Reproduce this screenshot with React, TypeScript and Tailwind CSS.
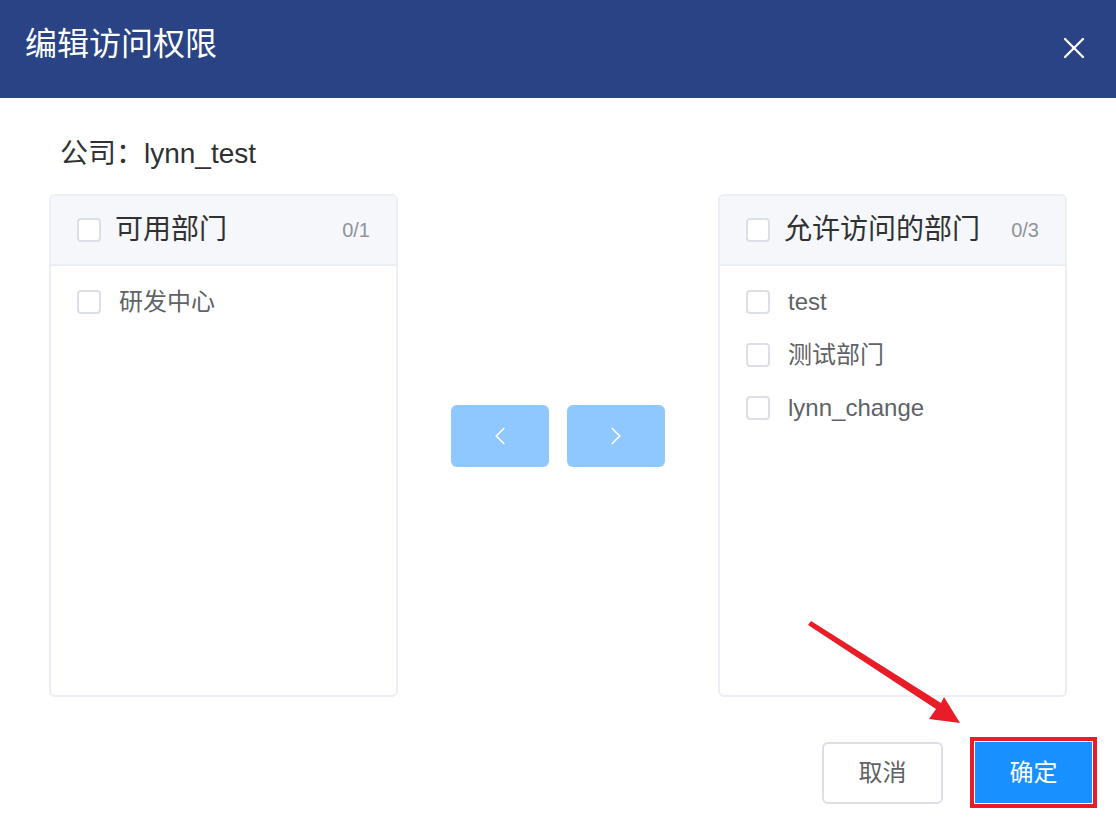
import { X, ChevronLeft, ChevronRight } from 'lucide-react';

const font = { fontFamily: '"Liberation Sans", "Noto Sans CJK SC", sans-serif' };

const Checkbox = () => (
  <span className="inline-block w-[24px] h-[24px] shrink-0 rounded-[4px] border-2 border-[#dcdfe6] bg-white" />
);

const Panel = ({ title, count, items }: { title: string; count: string; items: string[] }) => (
  <div className="w-[349px] h-[503px] shrink-0 rounded-[6px] border-2 border-[#ebeef5] bg-white overflow-hidden">
    <div className="h-[70px] bg-[#f5f7fa] border-b-2 border-[#ebeef5] flex items-center pl-[26px] pr-[26px]">
      <Checkbox />
      <span className="ml-[14px] text-[28px] text-[#303133] leading-none">{title}</span>
      <span className="ml-auto text-[20px] text-[#909399]">{count}</span>
    </div>
    <div className="pt-[9px]">
      {items.map((item) => (
        <div key={item} className="h-[53px] flex items-center pl-[26px]">
          <Checkbox />
          <span className="ml-[18px] text-[24px] text-[#606266]">{item}</span>
        </div>
      ))}
    </div>
  </div>
);

export default function App() {
  return (
    <div className="relative w-[1116px] h-[828px] bg-white overflow-hidden" style={font}>
      {/* Header */}
      <div className="h-[98px] bg-[#2a4385] flex items-center justify-between pl-[25px] pr-[24px]">
        <h1 className="text-[32px] text-white leading-none -mt-[10px]">编辑访问权限</h1>
        <X className="w-[36px] h-[36px] text-white -mt-[2px]" strokeWidth={1.5} />
      </div>

      {/* Body */}
      <div className="px-[49px]">
        <div className="h-[96px] flex items-center pt-[16px] pl-[11px] text-[28px] text-[#303133]">公司：lynn_test</div>
        <div className="flex">
          <Panel title="可用部门" count="0/1" items={['研发中心']} />
          <div className="flex-1 flex justify-center gap-[18px] pt-[211px]">
            <button className="w-[98px] h-[62px] rounded-[6px] bg-[#8fc7ff] flex items-center justify-center">
              <ChevronLeft className="w-[30px] h-[30px] text-white" strokeWidth={1.4} />
            </button>
            <button className="w-[98px] h-[62px] rounded-[6px] bg-[#8fc7ff] flex items-center justify-center">
              <ChevronRight className="w-[30px] h-[30px] text-white" strokeWidth={1.4} />
            </button>
          </div>
          <Panel title="允许访问的部门" count="0/3" items={['test', '测试部门', 'lynn_change']} />
        </div>
      </div>

      {/* Footer */}
      <div className="flex justify-end gap-[32px] pr-[24px] mt-[45px]">
        <button className="w-[121px] h-[62px] rounded-[6px] border-2 border-[#dcdfe6] bg-white text-[24px] text-[#606266]">取消</button>
        <button className="w-[117px] h-[61px] bg-[#1890ff] text-[24px] text-white outline-4 outline-offset-[1px] outline-[#e81d27]">确定</button>
      </div>

      {/* annotation arrow */}
      <svg className="absolute left-0 top-0 pointer-events-none" width="1116" height="828">
        <polygon points="808,625 811,621 941,703 944,697 960,723 929,719 936,709" fill="#e81d27" />
      </svg>
    </div>
  );
}
